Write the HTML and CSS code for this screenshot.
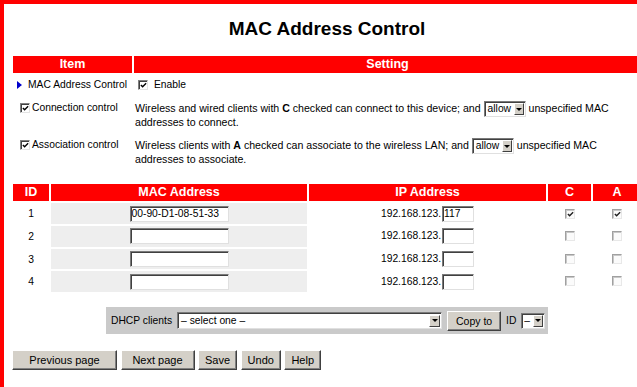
FILE: index.html
```html
<!DOCTYPE html>
<html lang="en">
<head>
  <meta charset="UTF-8">
  <meta name="viewport" content="width=device-width, initial-scale=1.0">
  <title>MAC Address Control</title>
  <link rel="stylesheet" href="styles.css">
</head>
<body>
  <div class="frame">
    <div class="page">
      <h1>MAC Address Control</h1>

      <div class="settings">
        <div class="th">Item</div>
        <div class="th">Setting</div>

        <div class="item item-main"><span class="marker"></span>MAC Address Control</div>
        <div class="setting setting-main"><span class="cb checked"><svg viewBox="0 0 8 8"><polyline points="1,3.5 3,5.5 7,1.5"/></svg></span>Enable</div>

        <div class="item item-check"><span class="cb checked"><svg viewBox="0 0 8 8"><polyline points="1,3.5 3,5.5 7,1.5"/></svg></span>Connection control</div>
        <div class="setting desc">Wireless and wired clients with <b>C</b> checked can connect to this device; and <span class="select sel-allow"><span class="sel-text">allow</span><span class="sel-btn"></span></span> unspecified MAC<br>addresses to connect.</div>

        <div class="item item-check"><span class="cb checked"><svg viewBox="0 0 8 8"><polyline points="1,3.5 3,5.5 7,1.5"/></svg></span>Association control</div>
        <div class="setting desc">Wireless clients with <b>A</b> checked can associate to the wireless LAN; and <span class="select sel-allow"><span class="sel-text">allow</span><span class="sel-btn"></span></span> unspecified MAC<br>addresses to associate.</div>
      </div>

      <table class="mac-table">
        <colgroup>
          <col class="col-id">
          <col class="col-mac">
          <col class="col-ip">
          <col class="col-c">
          <col class="col-a">
        </colgroup>
        <thead>
          <tr>
            <th>ID</th>
            <th>MAC Address</th>
            <th>IP Address</th>
            <th>C</th>
            <th>A</th>
          </tr>
        </thead>
        <tbody>
          <tr>
            <td>1</td>
            <td class="mac"><input class="field field-mac" type="text" value="00-90-D1-08-51-33"></td>
            <td class="ip">192.168.123.<input class="field field-ip" type="text" value="117"></td>
            <td><span class="cb soft checked"><svg viewBox="0 0 8 8"><polyline points="1,3.5 3,5.5 7,1.5"/></svg></span></td>
            <td><span class="cb soft checked"><svg viewBox="0 0 8 8"><polyline points="1,3.5 3,5.5 7,1.5"/></svg></span></td>
          </tr>
          <tr>
            <td>2</td>
            <td class="mac"><input class="field field-mac" type="text" value=""></td>
            <td class="ip">192.168.123.<input class="field field-ip" type="text" value=""></td>
            <td><span class="cb soft"></span></td>
            <td><span class="cb soft"></span></td>
          </tr>
          <tr>
            <td>3</td>
            <td class="mac"><input class="field field-mac" type="text" value=""></td>
            <td class="ip">192.168.123.<input class="field field-ip" type="text" value=""></td>
            <td><span class="cb soft"></span></td>
            <td><span class="cb soft"></span></td>
          </tr>
          <tr>
            <td>4</td>
            <td class="mac"><input class="field field-mac" type="text" value=""></td>
            <td class="ip">192.168.123.<input class="field field-ip" type="text" value=""></td>
            <td><span class="cb soft"></span></td>
            <td><span class="cb soft"></span></td>
          </tr>
        </tbody>
      </table>

      <div class="dhcp-bar">
        <span>DHCP clients</span>
        <span class="select sel-clients"><span class="sel-text">&ndash; select one &ndash;</span><span class="sel-btn"></span></span>
        <button class="btn btn-copy">Copy to</button>
        <span class="id-label">ID</span>
        <span class="select sel-id"><span class="sel-text">&ndash;</span><span class="sel-btn"></span></span>
      </div>

      <div class="actions">
        <button class="btn btn-prev">Previous page</button>
        <button class="btn btn-next">Next page</button>
        <button class="btn">Save</button>
        <button class="btn">Undo</button>
        <button class="btn">Help</button>
      </div>
    </div>
  </div>
</body>
</html>
```

FILE: styles.css
```css
:root {
  --red: #ff0000;
  --face: #d4d0c8;
  --cell-gray: #eeeeee;
  --bar-gray: #cacaca;
}

* {
  box-sizing: border-box;
}

body {
  margin: 0;
  font-family: "Liberation Sans", Arial, sans-serif;
  font-size: 10.3px;
  color: #000;
  background: #fff;
  overflow: hidden;
}

.frame {
  border-top: 4px solid var(--red);
  border-left: 4px solid var(--red);
  height: 387px;
  padding-left: 9px;
}

.page {
  width: 628px;
}

h1 {
  margin: 14px 0 16px;
  font-size: 19px;
  line-height: 22px;
  text-align: center;
}

/* top settings block */
.settings {
  display: grid;
  grid-template-columns: 119px 1fr;
  column-gap: 2px;
}

.th {
  background: var(--red);
  color: #fff;
  font-weight: bold;
  font-size: 12.5px;
  height: 17px;
  line-height: 17px;
  text-align: center;
}

.item,
.setting {
  padding: 5px 0 4px;
  line-height: 14px;
}

.item-main {
  padding-left: 4px;
}

.item-check {
  padding-left: 7px;
}

.setting-main {
  padding-left: 4px;
}

.desc {
  padding-left: 1px;
  font-size: 10.6px;
}

.marker {
  display: inline-block;
  width: 0;
  height: 0;
  border-left: 5px solid #0000cc;
  border-top: 4.5px solid transparent;
  border-bottom: 4.5px solid transparent;
  margin-right: 6px;
  vertical-align: -1px;
}

/* checkboxes */
.cb {
  display: inline-flex;
  align-items: center;
  justify-content: center;
  width: 10px;
  height: 10px;
  background: #fff;
  border: 1px solid;
  border-color: #808080 #e4e4e4 #e4e4e4 #808080;
  box-shadow: inset 1px 1px #404040;
  vertical-align: -1px;
}

.item .cb {
  margin-right: 2px;
}

.setting .cb {
  margin-right: 6px;
}

.cb svg {
  width: 7px;
  height: 7px;
  margin: 1px 0 0 1px;
}

.cb polyline {
  fill: none;
  stroke: #000;
  stroke-width: 1.6;
}

.cb.soft {
  border-color: #a0a0a0 #e8e8e8 #e8e8e8 #a0a0a0;
  box-shadow: inset 1px 1px #c8c8c8;
  background: #fbfbfb;
}

.cb.soft polyline {
  stroke: #202020;
}

/* fake select boxes */
.select {
  display: inline-flex;
  align-items: center;
  justify-content: space-between;
  height: 16px;
  margin: -2px 0;
  vertical-align: middle;
  background: #fff;
  border: 1px solid;
  border-color: #7a7a7a #e0e0e0 #e0e0e0 #7a7a7a;
  box-shadow: inset 1px 1px #404040;
  padding: 0 1px 0 3px;
  font-size: 10.3px;
}

.sel-text {
  line-height: 12px;
  white-space: nowrap;
}

.sel-btn {
  display: flex;
  align-items: center;
  justify-content: center;
  width: 10px;
  height: 12px;
  background: var(--face);
  border: 1px solid;
  border-color: #fff #404040 #404040 #fff;
}

.sel-btn::after {
  content: "";
  border-top: 3px solid #000;
  border-left: 3px solid transparent;
  border-right: 3px solid transparent;
}

.sel-allow {
  width: 42px;
}

/* MAC table */
.mac-table {
  border-collapse: separate;
  border-spacing: 2px;
  table-layout: fixed;
  width: 632px;
  margin: 12px 0 0 -2px;
}

.col-id { width: 36px; }
.col-mac { width: 256px; }
.col-ip { width: 237px; }
.col-c { width: 43px; }
.col-a { width: 48px; }

.mac-table th {
  background: var(--red);
  color: #fff;
  font-weight: bold;
  font-size: 12.5px;
  height: 17px;
  padding: 0;
  line-height: 17px;
}

.mac-table td {
  height: 20.7px;
  padding: 0;
  text-align: center;
  vertical-align: middle;
}

.mac-table td.mac {
  background: var(--cell-gray);
}

.field {
  height: 16px;
  padding: 0 1px;
  font-family: inherit;
  font-size: 10.3px;
  color: #000;
  background: #fff;
  border: 1px solid;
  border-color: #7a7a7a #e0e0e0 #e0e0e0 #7a7a7a;
  box-shadow: inset 1px 1px #404040;
  outline: none;
  vertical-align: middle;
}

.field-mac {
  width: 99px;
}

.field-ip {
  width: 32px;
  margin-left: 1px;
}

/* DHCP picker */
.dhcp-bar {
  display: flex;
  align-items: center;
  width: 442px;
  height: 27px;
  margin: 13px auto 0;
  padding-left: 5px;
  background: var(--bar-gray);
}

.sel-clients {
  width: 265px;
  height: 17px;
  margin: 0 0 0 5px;
}

.sel-clients .sel-btn {
  width: 11px;
}

.btn {
  height: 20px;
  padding: 0 6px;
  font-family: inherit;
  font-size: 11px;
  color: #000;
  background: var(--face);
  border: 1px solid;
  border-color: #fff #404040 #404040 #fff;
  box-shadow: inset -1px -1px #808080;
}

.btn-copy {
  width: 54px;
  margin-left: 5px;
  font-size: 10.5px;
}

.id-label {
  margin-left: 5px;
}

.sel-id {
  width: 24px;
  margin: 0 0 0 5px;
  padding-left: 2px;
}

.actions {
  display: flex;
  gap: 3.5px;
  margin: 16px 0 0 -1px;
}

.btn-prev {
  width: 105px;
}

.btn-next {
  width: 74px;
}
```
